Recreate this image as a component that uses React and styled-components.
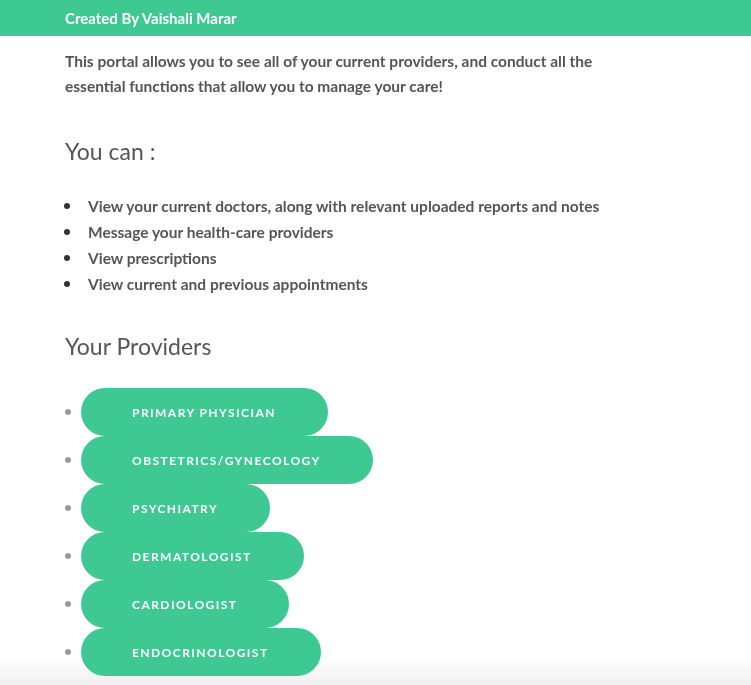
import React from "react";
import styled, { createGlobalStyle } from "styled-components";

const GlobalStyle = createGlobalStyle`
  body {
    margin: 0;
    background: #ffffff;
    font-family: Lato, "Open Sans", sans-serif;
    color: #555555;
  }
`;

const Header = styled.div`
  background: #3ec892;
  height: 36px;
  display: flex;
  align-items: center;
  padding: 0 65px;
  color: #ffffff;
  font-size: 15px;
  font-weight: 700;
`;

const Content = styled.div`
  padding: 13px 65px 0;
`;

const Intro = styled.p`
  margin: 0;
  max-width: 545px;
  font-size: 15.5px;
  font-weight: 700;
  line-height: 25px;
`;

const Heading = styled.h2`
  margin: ${(p) => p.$top || 37}px 0 0;
  font-size: 23px;
  font-weight: 400;
  line-height: 30px;
`;

const FeatureList = styled.ul`
  margin: 27px 0 0;
  padding: 0;
  list-style: none;
  font-size: 15.5px;
  font-weight: 700;
  line-height: 26px;
`;

const FeatureItem = styled.li`
  display: flex;
  align-items: center;
  &::before {
    content: "";
    flex: none;
    width: 6px;
    height: 6px;
    border-radius: 50%;
    background: #333333;
    margin: 0 18px 0 -1px;
  }
`;

const ProviderList = styled.ul`
  margin: 27px 0 0;
  padding: 0;
  list-style: none;
`;

const ProviderItem = styled.li`
  display: flex;
  align-items: center;
  gap: 10px;
  &::before {
    content: "";
    flex: none;
    width: 6px;
    height: 6px;
    border-radius: 50%;
    background: #9a9a9a;
  }
`;

const Pill = styled.button`
  height: 48px;
  border: none;
  border-radius: 24px;
  background: #3ec892;
  color: #ffffff;
  font-family: Lato, "Open Sans", sans-serif;
  font-size: 12px;
  font-weight: 700;
  letter-spacing: 1.45px;
  padding: 0 52px 0 51px;
  cursor: pointer;
`;

const BottomFade = styled.div`
  position: fixed;
  left: 0;
  right: 0;
  bottom: 0;
  height: 28px;
  z-index: -1;
  background: linear-gradient(to bottom, rgba(0, 0, 0, 0), rgba(0, 0, 0, 0.06));
  pointer-events: none;
`;

const features = [
  "View your current doctors, along with relevant uploaded reports and notes",
  "Message your health-care providers",
  "View prescriptions",
  "View current and previous appointments",
];

const providers = [
  "PRIMARY PHYSICIAN",
  "OBSTETRICS/GYNECOLOGY",
  "PSYCHIATRY",
  "DERMATOLOGIST",
  "CARDIOLOGIST",
  "ENDOCRINOLOGIST",
];

export default function App() {
  return (
    <>
      <GlobalStyle />
      <Header>Created By Vaishali Marar</Header>
      <Content>
        <Intro>
          This portal allows you to see all of your current providers, and
          conduct all the essential functions that allow you to manage your
          care!
        </Intro>
        <Heading>You can :</Heading>
        <FeatureList>
          {features.map((f) => (
            <FeatureItem key={f}>{f}</FeatureItem>
          ))}
        </FeatureList>
        <Heading as="h3" $top={34}>Your Providers</Heading>
        <ProviderList>
          {providers.map((p) => (
            <ProviderItem key={p}>
              <Pill>{p}</Pill>
            </ProviderItem>
          ))}
        </ProviderList>
      </Content>
      <BottomFade />
    </>
  );
}
